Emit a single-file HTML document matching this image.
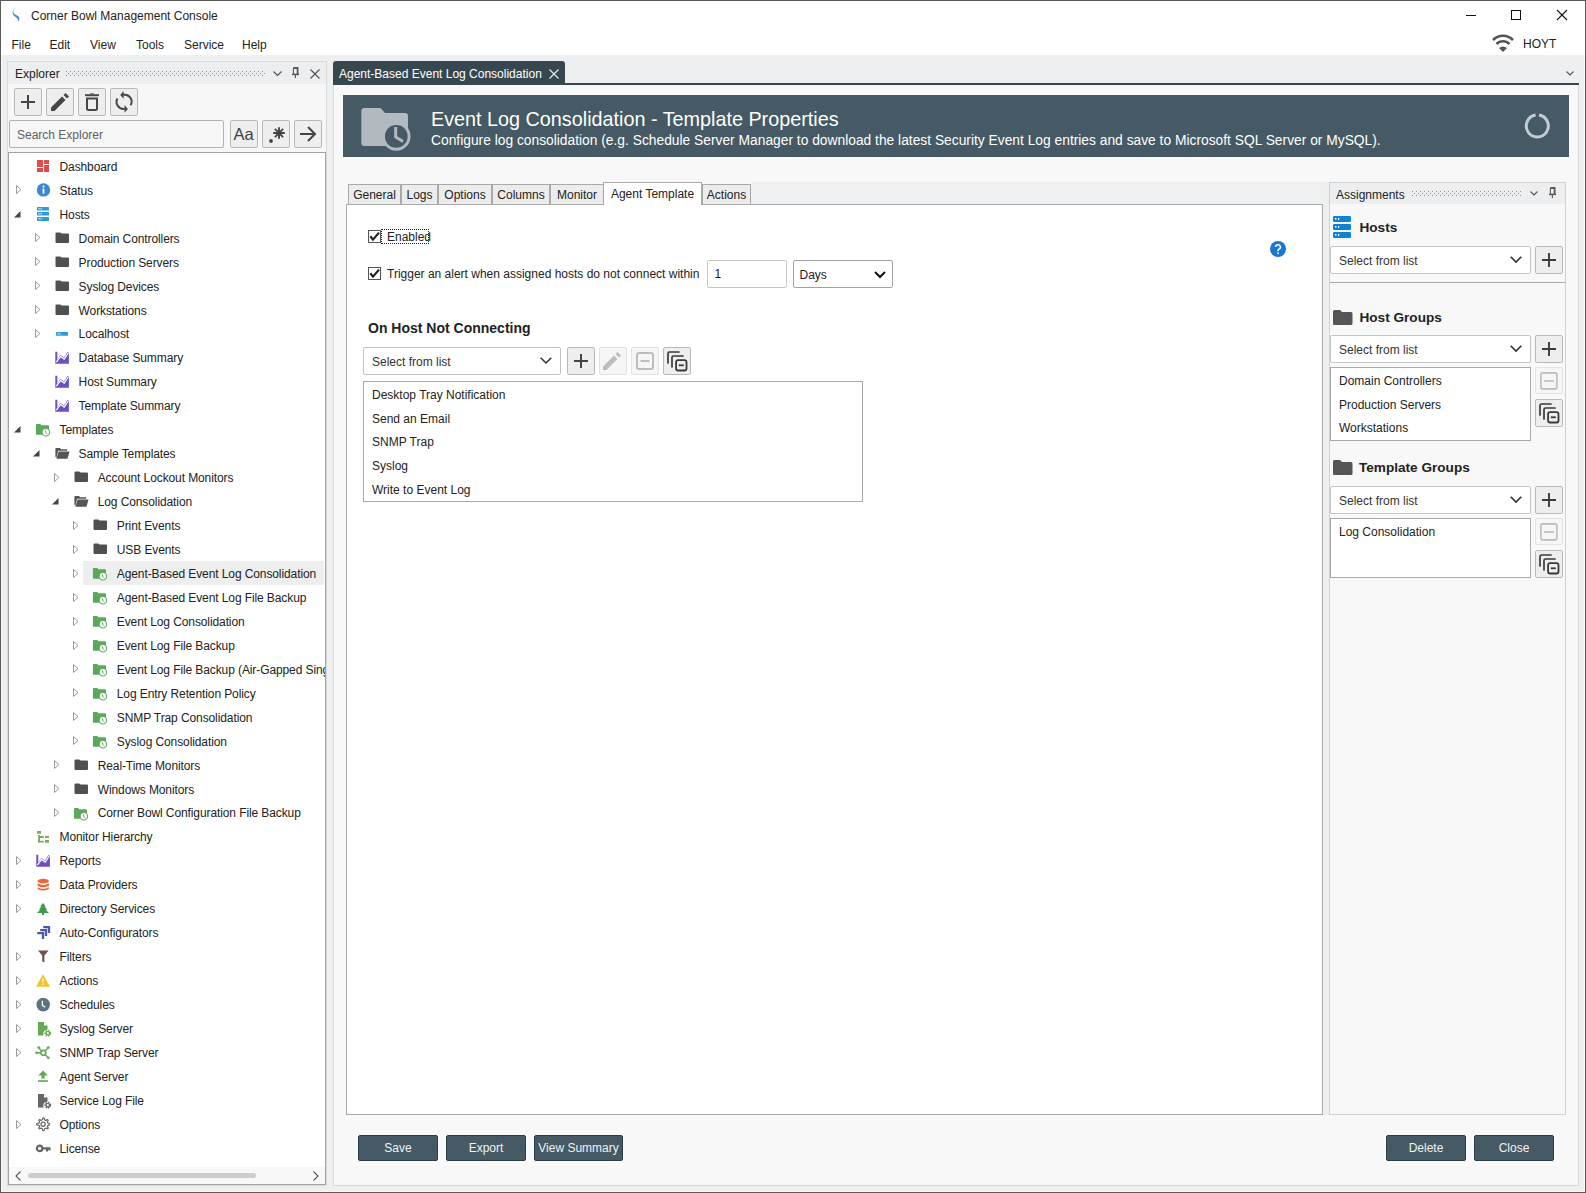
<!DOCTYPE html><html><head><meta charset="utf-8"><title>Corner Bowl Management Console</title><style>
*{box-sizing:border-box;margin:0;padding:0}
html,body{width:1586px;height:1193px;overflow:hidden}
body{position:relative;background:#eeeff1;font-family:"Liberation Sans",sans-serif;font-size:12px;color:#222}
.a{position:absolute}
.t{position:absolute;white-space:nowrap;line-height:16px;font-size:12px}
.b{position:absolute;border:1px solid #b9b9b9;background:#eeeeee;border-radius:2px}
.bd{position:absolute;border:1px solid #e2e2e2;background:#f6f6f6;border-radius:2px}
.cb{position:absolute;background:#fff;border:1px solid #c4c4c4;border-radius:2px}
.btn{position:absolute;background:#455a64;border:1px solid #2e3d44;border-radius:2px;color:#f2f2f2;text-align:center;line-height:25px;font-size:12px}
svg{position:absolute;overflow:visible}
</style></head><body>
<div class="a" style="left:0px;top:0px;width:1586px;height:55px;background:#fff"></div>
<svg style="left:0px;top:0px" width="30" height="30" viewBox="0 0 30 30"><path d="M16.6 7 C14.5 8.5 13.2 10 13.3 12 C13.4 13.8 15 14.6 17 15.5 C19 16.5 19.8 18 19.2 20 L18.6 22 C18.2 20 17.6 18.4 16 17.3 C14.5 16.3 12.6 15.2 12.6 12.6 C12.6 10.2 14.5 8.2 16.6 7Z" fill="#4a86d0"/></svg>
<div class="t" style="left:31px;top:7.84px;font-size:12px;line-height:16px;">Corner Bowl Management Console</div>
<div class="a" style="left:1466px;top:15px;width:10px;height:1px;background:#111"></div>
<div class="a" style="left:1511px;top:10px;width:10px;height:10px;border:1px solid #111"></div>
<svg style="left:1557px;top:10px" width="10" height="10" viewBox="0 0 10 10"><path d="M0 0L10 10M10 0L0 10" stroke="#111" stroke-width="1.1"/></svg>
<div class="t" style="left:11.5px;top:36.84px;font-size:12px;line-height:16px;">File</div>
<div class="t" style="left:49.5px;top:36.84px;font-size:12px;line-height:16px;">Edit</div>
<div class="t" style="left:90px;top:36.84px;font-size:12px;line-height:16px;">View</div>
<div class="t" style="left:136px;top:36.84px;font-size:12px;line-height:16px;">Tools</div>
<div class="t" style="left:184px;top:36.84px;font-size:12px;line-height:16px;">Service</div>
<div class="t" style="left:242px;top:36.84px;font-size:12px;line-height:16px;">Help</div>
<svg style="left:1492px;top:34px" width="22" height="18" viewBox="0 0 22 18"><path d="M1 6 A14 14 0 0 1 21 6" fill="none" stroke="#555" stroke-width="2.6"/><path d="M4.5 10 A9 9 0 0 1 17.5 10" fill="none" stroke="#555" stroke-width="2.6"/><path d="M7 14 L11 18 L15 14 A6 6 0 0 0 7 14Z" fill="#555"/></svg>
<div class="t" style="left:1523px;top:35.84px;font-size:12px;line-height:16px;">HOYT</div>
<div class="a" style="left:7px;top:61px;width:320px;height:1125px;border:1px solid #d9dadc;background:#f7f7f7"></div>
<div class="a" style="left:8px;top:62px;width:318px;height:22px;background:#eceef0"></div>
<div class="t" style="left:15px;top:65.84px;font-size:12px;line-height:16px;">Explorer</div>
<svg style="left:66px;top:71px" width="200" height="5"><defs><pattern id="gp66" width="4" height="4" patternUnits="userSpaceOnUse"><rect x="0" y="0" width="1" height="1" fill="#8a8a8a"/><rect x="2" y="2" width="1" height="1" fill="#8a8a8a"/></pattern></defs><rect width="200" height="5" fill="url(#gp66)"/></svg>
<svg style="left:273px;top:71px" width="9" height="6" viewBox="0 0 9 6"><path d="M0.5 0.5L4.5 4.5L8.5 0.5" fill="none" stroke="#555" stroke-width="1.2"/></svg>
<svg style="left:291px;top:67px" width="9" height="12" viewBox="0 0 9 12"><path d="M2.4 1 H6.6 V7" fill="none" stroke="#5a5a5a" stroke-width="1.8"/><path d="M2.4 1 V7" stroke="#5a5a5a" stroke-width="1.1"/><path d="M1 7.4 H8" stroke="#5a5a5a" stroke-width="1.5"/><path d="M4.4 7.5 V11" stroke="#5a5a5a" stroke-width="1.2"/></svg>
<svg style="left:310px;top:69px" width="10" height="10" viewBox="0 0 10 10"><path d="M0.5 0.5L9.5 9.5M9.5 0.5L0.5 9.5" stroke="#555" stroke-width="1.2"/></svg>
<div class="b" style="left:14px;top:88px;width:28px;height:28px"></div>
<div class="b" style="left:46px;top:88px;width:28px;height:28px"></div>
<div class="b" style="left:78px;top:88px;width:28px;height:28px"></div>
<div class="b" style="left:110px;top:88px;width:28px;height:28px"></div>
<svg style="left:21px;top:95px" width="14" height="14" viewBox="0 0 14 14"><path d="M7 0V14M0 7H14" stroke="#444" stroke-width="2"/></svg>
<svg style="left:51px;top:93px" width="18" height="18" viewBox="0 0 18 18"><path d="M0 18 L0 14.5 L11 3.5 L14.5 7 L3.5 18Z" fill="#474747"/><path d="M12.5 2 L14.5 0 L18 3.5 L16 5.5Z" fill="#474747"/></svg>
<svg style="left:85px;top:93px" width="14" height="18" viewBox="0 0 14 18"><rect x="0" y="1.2" width="14" height="2" fill="#474747"/><path d="M4 1.2 Q7 -0.5 10 1.2" fill="#474747"/><path d="M2 5.5 V15.5 Q2 17 3.5 17 H10.5 Q12 17 12 15.5 V5.5" fill="none" stroke="#474747" stroke-width="2"/><rect x="1" y="4.5" width="12" height="2" fill="#474747"/></svg>
<svg style="left:110px;top:88px" width="28" height="28" viewBox="0 0 28 28"><path d="M13.3 6.8 A7 7 0 0 1 20.6 17.3" fill="none" stroke="#474747" stroke-width="2"/><path d="M14.7 20.8 A7 7 0 0 1 7.4 10.5" fill="none" stroke="#474747" stroke-width="2"/><path d="M10.2 6.9 L13.6 3 V10.8Z" fill="#474747"/><path d="M17.9 20.9 L14.5 17 V24.8Z" fill="#474747"/></svg>
<div class="a" style="left:9px;top:120px;width:215px;height:28px;background:#f7f7f7;border:1px solid #b3b3b3;border-radius:2px"></div>
<div class="t" style="left:17px;top:126.84px;font-size:12px;line-height:16px;color:#5f5f5f">Search Explorer</div>
<div class="b" style="left:230px;top:120px;width:28px;height:28px"></div>
<div class="b" style="left:262px;top:120px;width:28px;height:28px"></div>
<div class="b" style="left:294px;top:120px;width:28px;height:28px"></div>
<div class="t" style="left:233.5px;top:124.28px;font-size:16.5px;line-height:20px;color:#404040;font-size:16.5px">Aa</div>
<svg style="left:268px;top:127px" width="20" height="16" viewBox="0 0 20 16"><circle cx="3" cy="14" r="1.9" fill="#444"/><path d="M11 0.2V11.8M5.2 6H16.8M6.9 1.9L15.1 10.1M15.1 1.9L6.9 10.1" stroke="#444" stroke-width="1.9"/></svg>
<svg style="left:300px;top:126px" width="16" height="16" viewBox="0 0 16 16"><path d="M0 8H15M8 1L15 8L8 15" fill="none" stroke="#444" stroke-width="2"/></svg>
<div class="a" style="left:8px;top:152px;width:318px;height:1033px;background:#fff;border:1px solid #a3a3a3"></div>
<div class="a" style="left:9px;top:153px;width:316px;height:1014px;overflow:hidden">
<svg style="left:26px;top:5px" width="16" height="16" viewBox="0 0 16 16"><rect x="2" y="2" width="6" height="7" fill="#e14b4b"/><rect x="9" y="2" width="5" height="4" fill="#e14b4b"/><rect x="2" y="10" width="6" height="4" fill="#e14b4b"/><rect x="9" y="7" width="5" height="7" fill="#e14b4b"/></svg>
<div class="t" style="left:50.5px;top:5.84px;font-size:12px;line-height:16px;letter-spacing:-0.1px">Dashboard</div>
<svg style="left:7px;top:32.45px" width="6" height="9" viewBox="0 0 6 9"><path d="M0.5 0.5 L5 4.5 L0.5 8.5Z" fill="none" stroke="#9a9a9a" stroke-width="1"/></svg>
<svg style="left:26px;top:29px" width="16" height="16" viewBox="0 0 16 16"><circle cx="8.5" cy="7.9" r="6.7" fill="#3b88d6"/><rect x="7.6" y="6.6" width="1.8" height="5" fill="#fff"/><rect x="7.6" y="3.6" width="1.8" height="1.8" fill="#fff"/></svg>
<div class="t" style="left:50.5px;top:29.79px;font-size:12px;line-height:16px;letter-spacing:-0.1px">Status</div>
<svg style="left:4.699999999999999px;top:57.90px" width="7" height="7" viewBox="0 0 7 7"><path d="M6.5 0 V6.5 H0Z" fill="#444"/></svg>
<svg style="left:26px;top:53px" width="16" height="16" viewBox="0 0 16 16"><rect x="2" y="1" width="12" height="3.6" rx="0.6" fill="#2e9ad6"/><rect x="3.5" y="2.2" width="1.2" height="1.2" fill="#fff"/><rect x="5.5" y="2.2" width="1.2" height="1.2" fill="#fff"/><rect x="2" y="6" width="12" height="3.6" rx="0.6" fill="#2e9ad6"/><rect x="3.5" y="7.2" width="1.2" height="1.2" fill="#fff"/><rect x="5.5" y="7.2" width="1.2" height="1.2" fill="#fff"/><rect x="2" y="11" width="12" height="4" rx="0.6" fill="#2e9ad6"/><rect x="3.5" y="12.2" width="1.2" height="1.2" fill="#fff"/><rect x="5.5" y="12.2" width="1.2" height="1.2" fill="#fff"/></svg>
<div class="t" style="left:50.5px;top:53.74px;font-size:12px;line-height:16px;letter-spacing:-0.1px">Hosts</div>
<svg style="left:26px;top:80.35px" width="6" height="9" viewBox="0 0 6 9"><path d="M0.5 0.5 L5 4.5 L0.5 8.5Z" fill="none" stroke="#9a9a9a" stroke-width="1"/></svg>
<svg style="left:45px;top:77px" width="16" height="16" viewBox="0 0 16 16"><path d="M1.5 3.4 Q1.5 2.4 2.5 2.4 H6.3 L7.5 3.6 H14 Q15 3.6 15 4.6 V11.9 Q15 12.9 14 12.9 H2.5 Q1.5 12.9 1.5 11.9Z" fill="#505050"/></svg>
<div class="t" style="left:69.6px;top:77.69px;font-size:12px;line-height:16px;letter-spacing:-0.1px">Domain Controllers</div>
<svg style="left:26px;top:104.30px" width="6" height="9" viewBox="0 0 6 9"><path d="M0.5 0.5 L5 4.5 L0.5 8.5Z" fill="none" stroke="#9a9a9a" stroke-width="1"/></svg>
<svg style="left:45px;top:101px" width="16" height="16" viewBox="0 0 16 16"><path d="M1.5 3.4 Q1.5 2.4 2.5 2.4 H6.3 L7.5 3.6 H14 Q15 3.6 15 4.6 V11.9 Q15 12.9 14 12.9 H2.5 Q1.5 12.9 1.5 11.9Z" fill="#505050"/></svg>
<div class="t" style="left:69.6px;top:101.64px;font-size:12px;line-height:16px;letter-spacing:-0.1px">Production Servers</div>
<svg style="left:26px;top:128.25px" width="6" height="9" viewBox="0 0 6 9"><path d="M0.5 0.5 L5 4.5 L0.5 8.5Z" fill="none" stroke="#9a9a9a" stroke-width="1"/></svg>
<svg style="left:45px;top:125px" width="16" height="16" viewBox="0 0 16 16"><path d="M1.5 3.4 Q1.5 2.4 2.5 2.4 H6.3 L7.5 3.6 H14 Q15 3.6 15 4.6 V11.9 Q15 12.9 14 12.9 H2.5 Q1.5 12.9 1.5 11.9Z" fill="#505050"/></svg>
<div class="t" style="left:69.6px;top:125.59px;font-size:12px;line-height:16px;letter-spacing:-0.1px">Syslog Devices</div>
<svg style="left:26px;top:152.20px" width="6" height="9" viewBox="0 0 6 9"><path d="M0.5 0.5 L5 4.5 L0.5 8.5Z" fill="none" stroke="#9a9a9a" stroke-width="1"/></svg>
<svg style="left:45px;top:149px" width="16" height="16" viewBox="0 0 16 16"><path d="M1.5 3.4 Q1.5 2.4 2.5 2.4 H6.3 L7.5 3.6 H14 Q15 3.6 15 4.6 V11.9 Q15 12.9 14 12.9 H2.5 Q1.5 12.9 1.5 11.9Z" fill="#505050"/></svg>
<div class="t" style="left:69.6px;top:149.54px;font-size:12px;line-height:16px;letter-spacing:-0.1px">Workstations</div>
<svg style="left:26px;top:176.15px" width="6" height="9" viewBox="0 0 6 9"><path d="M0.5 0.5 L5 4.5 L0.5 8.5Z" fill="none" stroke="#9a9a9a" stroke-width="1"/></svg>
<svg style="left:45px;top:173px" width="16" height="16" viewBox="0 0 16 16"><rect x="2" y="6" width="12" height="3.8" rx="0.6" fill="#2e9ad6"/><rect x="3.5" y="7.3" width="1.2" height="1.2" fill="#fff"/><rect x="5.5" y="7.3" width="1.2" height="1.2" fill="#fff"/></svg>
<div class="t" style="left:69.6px;top:173.49px;font-size:12px;line-height:16px;letter-spacing:-0.1px">Localhost</div>
<svg style="left:45px;top:197px" width="16" height="16" viewBox="0 0 16 16"><path d="M1.3 1.8 H3.3 V9.6 L6.6 5 L10 7.6 L13.6 2 L14.9 3 V13.7 H1.3Z" fill="#6d4fc1"/><path d="M2.4 12.2 L6.6 6.4 L10.2 9.1 L14.3 3" fill="none" stroke="#fff" stroke-width="1.2"/></svg>
<div class="t" style="left:69.6px;top:197.44px;font-size:12px;line-height:16px;letter-spacing:-0.1px">Database Summary</div>
<svg style="left:45px;top:221px" width="16" height="16" viewBox="0 0 16 16"><path d="M1.3 1.8 H3.3 V9.6 L6.6 5 L10 7.6 L13.6 2 L14.9 3 V13.7 H1.3Z" fill="#6d4fc1"/><path d="M2.4 12.2 L6.6 6.4 L10.2 9.1 L14.3 3" fill="none" stroke="#fff" stroke-width="1.2"/></svg>
<div class="t" style="left:69.6px;top:221.39px;font-size:12px;line-height:16px;letter-spacing:-0.1px">Host Summary</div>
<svg style="left:45px;top:245px" width="16" height="16" viewBox="0 0 16 16"><path d="M1.3 1.8 H3.3 V9.6 L6.6 5 L10 7.6 L13.6 2 L14.9 3 V13.7 H1.3Z" fill="#6d4fc1"/><path d="M2.4 12.2 L6.6 6.4 L10.2 9.1 L14.3 3" fill="none" stroke="#fff" stroke-width="1.2"/></svg>
<div class="t" style="left:69.6px;top:245.34px;font-size:12px;line-height:16px;letter-spacing:-0.1px">Template Summary</div>
<svg style="left:4.699999999999999px;top:273.45px" width="7" height="7" viewBox="0 0 7 7"><path d="M6.5 0 V6.5 H0Z" fill="#444"/></svg>
<svg style="left:26px;top:268px" width="16" height="16" viewBox="0 0 16 16"><path d="M0.9 4 Q0.9 3.1 1.8 3.1 H5.2 L6.4 4.3 H13.1 Q14 4.3 14 5.2 V12.8 Q14 13.7 13.1 13.7 H1.8 Q0.9 13.7 0.9 12.8Z" fill="#5aa85a"/><circle cx="10.9" cy="11.3" r="3.75" fill="#fff" stroke="#5aa85a" stroke-width="1.1"/><path d="M10.5 9.1 V11.5 L12.5 12.9" fill="none" stroke="#5aa85a" stroke-width="0.85"/></svg>
<div class="t" style="left:50.5px;top:269.29px;font-size:12px;line-height:16px;letter-spacing:-0.1px">Templates</div>
<svg style="left:23.700000000000003px;top:297.40px" width="7" height="7" viewBox="0 0 7 7"><path d="M6.5 0 V6.5 H0Z" fill="#444"/></svg>
<svg style="left:45px;top:292px" width="16" height="16" viewBox="0 0 16 16"><path d="M1.4 4 Q1.4 3.1 2.3 3.1 H6 L7.2 4.3 H13.2 V5.7 H4.1 L2.5 12.5 Q1.4 12.5 1.4 11.6Z" fill="#555"/><path d="M4.6 6.6 H15.5 L13.5 13.8 H2.4Z" fill="#555"/></svg>
<div class="t" style="left:69.6px;top:293.24px;font-size:12px;line-height:16px;letter-spacing:-0.1px">Sample Templates</div>
<svg style="left:45px;top:319.85px" width="6" height="9" viewBox="0 0 6 9"><path d="M0.5 0.5 L5 4.5 L0.5 8.5Z" fill="none" stroke="#9a9a9a" stroke-width="1"/></svg>
<svg style="left:64px;top:316px" width="16" height="16" viewBox="0 0 16 16"><path d="M1.5 3.4 Q1.5 2.4 2.5 2.4 H6.3 L7.5 3.6 H14 Q15 3.6 15 4.6 V11.9 Q15 12.9 14 12.9 H2.5 Q1.5 12.9 1.5 11.9Z" fill="#505050"/></svg>
<div class="t" style="left:88.7px;top:317.19px;font-size:12px;line-height:16px;letter-spacing:-0.1px">Account Lockout Monitors</div>
<svg style="left:42.7px;top:345.30px" width="7" height="7" viewBox="0 0 7 7"><path d="M6.5 0 V6.5 H0Z" fill="#444"/></svg>
<svg style="left:64px;top:340px" width="16" height="16" viewBox="0 0 16 16"><path d="M1.4 4 Q1.4 3.1 2.3 3.1 H6 L7.2 4.3 H13.2 V5.7 H4.1 L2.5 12.5 Q1.4 12.5 1.4 11.6Z" fill="#555"/><path d="M4.6 6.6 H15.5 L13.5 13.8 H2.4Z" fill="#555"/></svg>
<div class="t" style="left:88.7px;top:341.14px;font-size:12px;line-height:16px;letter-spacing:-0.1px">Log Consolidation</div>
<svg style="left:64px;top:367.75px" width="6" height="9" viewBox="0 0 6 9"><path d="M0.5 0.5 L5 4.5 L0.5 8.5Z" fill="none" stroke="#9a9a9a" stroke-width="1"/></svg>
<svg style="left:83px;top:364px" width="16" height="16" viewBox="0 0 16 16"><path d="M1.5 3.4 Q1.5 2.4 2.5 2.4 H6.3 L7.5 3.6 H14 Q15 3.6 15 4.6 V11.9 Q15 12.9 14 12.9 H2.5 Q1.5 12.9 1.5 11.9Z" fill="#505050"/></svg>
<div class="t" style="left:107.80000000000001px;top:365.09px;font-size:12px;line-height:16px;letter-spacing:-0.1px">Print Events</div>
<svg style="left:64px;top:391.70px" width="6" height="9" viewBox="0 0 6 9"><path d="M0.5 0.5 L5 4.5 L0.5 8.5Z" fill="none" stroke="#9a9a9a" stroke-width="1"/></svg>
<svg style="left:83px;top:388px" width="16" height="16" viewBox="0 0 16 16"><path d="M1.5 3.4 Q1.5 2.4 2.5 2.4 H6.3 L7.5 3.6 H14 Q15 3.6 15 4.6 V11.9 Q15 12.9 14 12.9 H2.5 Q1.5 12.9 1.5 11.9Z" fill="#505050"/></svg>
<div class="t" style="left:107.80000000000001px;top:389.04px;font-size:12px;line-height:16px;letter-spacing:-0.1px">USB Events</div>
<div class="a" style="left:74px;top:408px;width:241px;height:24px;background:#eeeeee"></div>
<svg style="left:64px;top:415.65px" width="6" height="9" viewBox="0 0 6 9"><path d="M0.5 0.5 L5 4.5 L0.5 8.5Z" fill="none" stroke="#9a9a9a" stroke-width="1"/></svg>
<svg style="left:83px;top:412px" width="16" height="16" viewBox="0 0 16 16"><path d="M0.9 4 Q0.9 3.1 1.8 3.1 H5.2 L6.4 4.3 H13.1 Q14 4.3 14 5.2 V12.8 Q14 13.7 13.1 13.7 H1.8 Q0.9 13.7 0.9 12.8Z" fill="#5aa85a"/><circle cx="10.9" cy="11.3" r="3.75" fill="#fff" stroke="#5aa85a" stroke-width="1.1"/><path d="M10.5 9.1 V11.5 L12.5 12.9" fill="none" stroke="#5aa85a" stroke-width="0.85"/></svg>
<div class="t" style="left:107.80000000000001px;top:412.99px;font-size:12px;line-height:16px;letter-spacing:-0.1px">Agent-Based Event Log Consolidation</div>
<svg style="left:64px;top:439.60px" width="6" height="9" viewBox="0 0 6 9"><path d="M0.5 0.5 L5 4.5 L0.5 8.5Z" fill="none" stroke="#9a9a9a" stroke-width="1"/></svg>
<svg style="left:83px;top:436px" width="16" height="16" viewBox="0 0 16 16"><path d="M0.9 4 Q0.9 3.1 1.8 3.1 H5.2 L6.4 4.3 H13.1 Q14 4.3 14 5.2 V12.8 Q14 13.7 13.1 13.7 H1.8 Q0.9 13.7 0.9 12.8Z" fill="#5aa85a"/><circle cx="10.9" cy="11.3" r="3.75" fill="#fff" stroke="#5aa85a" stroke-width="1.1"/><path d="M10.5 9.1 V11.5 L12.5 12.9" fill="none" stroke="#5aa85a" stroke-width="0.85"/></svg>
<div class="t" style="left:107.80000000000001px;top:436.94px;font-size:12px;line-height:16px;letter-spacing:-0.1px">Agent-Based Event Log File Backup</div>
<svg style="left:64px;top:463.55px" width="6" height="9" viewBox="0 0 6 9"><path d="M0.5 0.5 L5 4.5 L0.5 8.5Z" fill="none" stroke="#9a9a9a" stroke-width="1"/></svg>
<svg style="left:83px;top:460px" width="16" height="16" viewBox="0 0 16 16"><path d="M0.9 4 Q0.9 3.1 1.8 3.1 H5.2 L6.4 4.3 H13.1 Q14 4.3 14 5.2 V12.8 Q14 13.7 13.1 13.7 H1.8 Q0.9 13.7 0.9 12.8Z" fill="#5aa85a"/><circle cx="10.9" cy="11.3" r="3.75" fill="#fff" stroke="#5aa85a" stroke-width="1.1"/><path d="M10.5 9.1 V11.5 L12.5 12.9" fill="none" stroke="#5aa85a" stroke-width="0.85"/></svg>
<div class="t" style="left:107.80000000000001px;top:460.89px;font-size:12px;line-height:16px;letter-spacing:-0.1px">Event Log Consolidation</div>
<svg style="left:64px;top:487.50px" width="6" height="9" viewBox="0 0 6 9"><path d="M0.5 0.5 L5 4.5 L0.5 8.5Z" fill="none" stroke="#9a9a9a" stroke-width="1"/></svg>
<svg style="left:83px;top:484px" width="16" height="16" viewBox="0 0 16 16"><path d="M0.9 4 Q0.9 3.1 1.8 3.1 H5.2 L6.4 4.3 H13.1 Q14 4.3 14 5.2 V12.8 Q14 13.7 13.1 13.7 H1.8 Q0.9 13.7 0.9 12.8Z" fill="#5aa85a"/><circle cx="10.9" cy="11.3" r="3.75" fill="#fff" stroke="#5aa85a" stroke-width="1.1"/><path d="M10.5 9.1 V11.5 L12.5 12.9" fill="none" stroke="#5aa85a" stroke-width="0.85"/></svg>
<div class="t" style="left:107.80000000000001px;top:484.84px;font-size:12px;line-height:16px;letter-spacing:-0.1px">Event Log File Backup</div>
<svg style="left:64px;top:511.45px" width="6" height="9" viewBox="0 0 6 9"><path d="M0.5 0.5 L5 4.5 L0.5 8.5Z" fill="none" stroke="#9a9a9a" stroke-width="1"/></svg>
<svg style="left:83px;top:508px" width="16" height="16" viewBox="0 0 16 16"><path d="M0.9 4 Q0.9 3.1 1.8 3.1 H5.2 L6.4 4.3 H13.1 Q14 4.3 14 5.2 V12.8 Q14 13.7 13.1 13.7 H1.8 Q0.9 13.7 0.9 12.8Z" fill="#5aa85a"/><circle cx="10.9" cy="11.3" r="3.75" fill="#fff" stroke="#5aa85a" stroke-width="1.1"/><path d="M10.5 9.1 V11.5 L12.5 12.9" fill="none" stroke="#5aa85a" stroke-width="0.85"/></svg>
<div class="t" style="left:107.80000000000001px;top:508.79px;font-size:12px;line-height:16px;letter-spacing:-0.1px">Event Log File Backup (Air-Gapped Single Host)</div>
<svg style="left:64px;top:535.40px" width="6" height="9" viewBox="0 0 6 9"><path d="M0.5 0.5 L5 4.5 L0.5 8.5Z" fill="none" stroke="#9a9a9a" stroke-width="1"/></svg>
<svg style="left:83px;top:532px" width="16" height="16" viewBox="0 0 16 16"><path d="M0.9 4 Q0.9 3.1 1.8 3.1 H5.2 L6.4 4.3 H13.1 Q14 4.3 14 5.2 V12.8 Q14 13.7 13.1 13.7 H1.8 Q0.9 13.7 0.9 12.8Z" fill="#5aa85a"/><circle cx="10.9" cy="11.3" r="3.75" fill="#fff" stroke="#5aa85a" stroke-width="1.1"/><path d="M10.5 9.1 V11.5 L12.5 12.9" fill="none" stroke="#5aa85a" stroke-width="0.85"/></svg>
<div class="t" style="left:107.80000000000001px;top:532.74px;font-size:12px;line-height:16px;letter-spacing:-0.1px">Log Entry Retention Policy</div>
<svg style="left:64px;top:559.35px" width="6" height="9" viewBox="0 0 6 9"><path d="M0.5 0.5 L5 4.5 L0.5 8.5Z" fill="none" stroke="#9a9a9a" stroke-width="1"/></svg>
<svg style="left:83px;top:556px" width="16" height="16" viewBox="0 0 16 16"><path d="M0.9 4 Q0.9 3.1 1.8 3.1 H5.2 L6.4 4.3 H13.1 Q14 4.3 14 5.2 V12.8 Q14 13.7 13.1 13.7 H1.8 Q0.9 13.7 0.9 12.8Z" fill="#5aa85a"/><circle cx="10.9" cy="11.3" r="3.75" fill="#fff" stroke="#5aa85a" stroke-width="1.1"/><path d="M10.5 9.1 V11.5 L12.5 12.9" fill="none" stroke="#5aa85a" stroke-width="0.85"/></svg>
<div class="t" style="left:107.80000000000001px;top:556.69px;font-size:12px;line-height:16px;letter-spacing:-0.1px">SNMP Trap Consolidation</div>
<svg style="left:64px;top:583.30px" width="6" height="9" viewBox="0 0 6 9"><path d="M0.5 0.5 L5 4.5 L0.5 8.5Z" fill="none" stroke="#9a9a9a" stroke-width="1"/></svg>
<svg style="left:83px;top:580px" width="16" height="16" viewBox="0 0 16 16"><path d="M0.9 4 Q0.9 3.1 1.8 3.1 H5.2 L6.4 4.3 H13.1 Q14 4.3 14 5.2 V12.8 Q14 13.7 13.1 13.7 H1.8 Q0.9 13.7 0.9 12.8Z" fill="#5aa85a"/><circle cx="10.9" cy="11.3" r="3.75" fill="#fff" stroke="#5aa85a" stroke-width="1.1"/><path d="M10.5 9.1 V11.5 L12.5 12.9" fill="none" stroke="#5aa85a" stroke-width="0.85"/></svg>
<div class="t" style="left:107.80000000000001px;top:580.64px;font-size:12px;line-height:16px;letter-spacing:-0.1px">Syslog Consolidation</div>
<svg style="left:45px;top:607.25px" width="6" height="9" viewBox="0 0 6 9"><path d="M0.5 0.5 L5 4.5 L0.5 8.5Z" fill="none" stroke="#9a9a9a" stroke-width="1"/></svg>
<svg style="left:64px;top:604px" width="16" height="16" viewBox="0 0 16 16"><path d="M1.5 3.4 Q1.5 2.4 2.5 2.4 H6.3 L7.5 3.6 H14 Q15 3.6 15 4.6 V11.9 Q15 12.9 14 12.9 H2.5 Q1.5 12.9 1.5 11.9Z" fill="#505050"/></svg>
<div class="t" style="left:88.7px;top:604.59px;font-size:12px;line-height:16px;letter-spacing:-0.1px">Real-Time Monitors</div>
<svg style="left:45px;top:631.20px" width="6" height="9" viewBox="0 0 6 9"><path d="M0.5 0.5 L5 4.5 L0.5 8.5Z" fill="none" stroke="#9a9a9a" stroke-width="1"/></svg>
<svg style="left:64px;top:628px" width="16" height="16" viewBox="0 0 16 16"><path d="M1.5 3.4 Q1.5 2.4 2.5 2.4 H6.3 L7.5 3.6 H14 Q15 3.6 15 4.6 V11.9 Q15 12.9 14 12.9 H2.5 Q1.5 12.9 1.5 11.9Z" fill="#505050"/></svg>
<div class="t" style="left:88.7px;top:628.54px;font-size:12px;line-height:16px;letter-spacing:-0.1px">Windows Monitors</div>
<svg style="left:45px;top:655.15px" width="6" height="9" viewBox="0 0 6 9"><path d="M0.5 0.5 L5 4.5 L0.5 8.5Z" fill="none" stroke="#9a9a9a" stroke-width="1"/></svg>
<svg style="left:64px;top:652px" width="16" height="16" viewBox="0 0 16 16"><path d="M0.9 4 Q0.9 3.1 1.8 3.1 H5.2 L6.4 4.3 H13.1 Q14 4.3 14 5.2 V12.8 Q14 13.7 13.1 13.7 H1.8 Q0.9 13.7 0.9 12.8Z" fill="#5aa85a"/><circle cx="10.9" cy="11.3" r="3.75" fill="#fff" stroke="#5aa85a" stroke-width="1.1"/><path d="M10.5 9.1 V11.5 L12.5 12.9" fill="none" stroke="#5aa85a" stroke-width="0.85"/></svg>
<div class="t" style="left:88.7px;top:652.49px;font-size:12px;line-height:16px;letter-spacing:-0.1px">Corner Bowl Configuration File Backup</div>
<svg style="left:26px;top:676px" width="16" height="16" viewBox="0 0 16 16"><rect x="2.1" y="2" width="3.9" height="2.7" fill="#7aa860"/><rect x="3.2" y="6" width="1.8" height="7.5" fill="#7aa860"/><rect x="5" y="7" width="3.8" height="2" fill="#7aa860"/><rect x="3.2" y="11.8" width="5.6" height="1.7" fill="#7aa860"/><rect x="10.1" y="6.9" width="3.8" height="2.1" fill="#7aa860"/><rect x="10.1" y="11" width="3.8" height="2.8" fill="#7aa860"/></svg>
<div class="t" style="left:50.5px;top:676.44px;font-size:12px;line-height:16px;letter-spacing:-0.1px">Monitor Hierarchy</div>
<svg style="left:7px;top:703.05px" width="6" height="9" viewBox="0 0 6 9"><path d="M0.5 0.5 L5 4.5 L0.5 8.5Z" fill="none" stroke="#9a9a9a" stroke-width="1"/></svg>
<svg style="left:26px;top:700px" width="16" height="16" viewBox="0 0 16 16"><path d="M1.3 1.8 H3.3 V9.6 L6.6 5 L10 7.6 L13.6 2 L14.9 3 V13.7 H1.3Z" fill="#6d4fc1"/><path d="M2.4 12.2 L6.6 6.4 L10.2 9.1 L14.3 3" fill="none" stroke="#fff" stroke-width="1.2"/></svg>
<div class="t" style="left:50.5px;top:700.39px;font-size:12px;line-height:16px;letter-spacing:-0.1px">Reports</div>
<svg style="left:7px;top:727.00px" width="6" height="9" viewBox="0 0 6 9"><path d="M0.5 0.5 L5 4.5 L0.5 8.5Z" fill="none" stroke="#9a9a9a" stroke-width="1"/></svg>
<svg style="left:26px;top:724px" width="16" height="16" viewBox="0 0 16 16"><ellipse cx="8.2" cy="4.1" rx="5.7" ry="2.3" fill="#e8673d"/><path d="M2.5 6.3 Q8.2 9.5 13.9 6.3 V8.7 Q8.2 11.9 2.5 8.7Z" fill="#e8673d"/><path d="M2.5 10.2 Q8.2 13.4 13.9 10.2 V12 Q8.2 15.2 2.5 12Z" fill="#e8673d"/></svg>
<div class="t" style="left:50.5px;top:724.34px;font-size:12px;line-height:16px;letter-spacing:-0.1px">Data Providers</div>
<svg style="left:7px;top:750.95px" width="6" height="9" viewBox="0 0 6 9"><path d="M0.5 0.5 L5 4.5 L0.5 8.5Z" fill="none" stroke="#9a9a9a" stroke-width="1"/></svg>
<svg style="left:26px;top:747px" width="16" height="16" viewBox="0 0 16 16"><path d="M8 3 L10.8 6.6 H9.6 L12.2 9.8 H10.8 L14 13 H9 V15 H7 V13 H2 L5.2 9.8 H3.8 L6.4 6.6 H5.2Z" fill="#3f9a4c"/></svg>
<div class="t" style="left:50.5px;top:748.29px;font-size:12px;line-height:16px;letter-spacing:-0.1px">Directory Services</div>
<svg style="left:26px;top:771px" width="16" height="16" viewBox="0 0 16 16"><path d="M8.2 3.2 H14 V9 M5.2 6.2 H11 V12 M2.2 9.2 H8 V15" fill="none" stroke="#4a58b4" stroke-width="2.3"/></svg>
<div class="t" style="left:50.5px;top:772.24px;font-size:12px;line-height:16px;letter-spacing:-0.1px">Auto-Configurators</div>
<svg style="left:7px;top:798.85px" width="6" height="9" viewBox="0 0 6 9"><path d="M0.5 0.5 L5 4.5 L0.5 8.5Z" fill="none" stroke="#9a9a9a" stroke-width="1"/></svg>
<svg style="left:26px;top:795px" width="16" height="16" viewBox="0 0 16 16"><path d="M3 2.5 H13.6 L9.4 7.4 V14.6 L7.2 13.2 V7.4Z" fill="#6b524a"/></svg>
<div class="t" style="left:50.5px;top:796.19px;font-size:12px;line-height:16px;letter-spacing:-0.1px">Filters</div>
<svg style="left:7px;top:822.80px" width="6" height="9" viewBox="0 0 6 9"><path d="M0.5 0.5 L5 4.5 L0.5 8.5Z" fill="none" stroke="#9a9a9a" stroke-width="1"/></svg>
<svg style="left:26px;top:819px" width="16" height="16" viewBox="0 0 16 16"><path d="M8 2.2 L15.1 14.7 H1Z" fill="#f4c12f"/><rect x="7.4" y="6.6" width="1.3" height="3.8" fill="#fff"/><rect x="7.4" y="11.4" width="1.3" height="1.4" fill="#fff"/></svg>
<div class="t" style="left:50.5px;top:820.14px;font-size:12px;line-height:16px;letter-spacing:-0.1px">Actions</div>
<svg style="left:7px;top:846.75px" width="6" height="9" viewBox="0 0 6 9"><path d="M0.5 0.5 L5 4.5 L0.5 8.5Z" fill="none" stroke="#9a9a9a" stroke-width="1"/></svg>
<svg style="left:26px;top:843px" width="16" height="16" viewBox="0 0 16 16"><circle cx="8.2" cy="8.6" r="6.8" fill="#5c7480"/><path d="M7.4 4.8 V9.4 L10.2 11.2" fill="none" stroke="#fff" stroke-width="1.3"/></svg>
<div class="t" style="left:50.5px;top:844.09px;font-size:12px;line-height:16px;letter-spacing:-0.1px">Schedules</div>
<svg style="left:7px;top:870.70px" width="6" height="9" viewBox="0 0 6 9"><path d="M0.5 0.5 L5 4.5 L0.5 8.5Z" fill="none" stroke="#9a9a9a" stroke-width="1"/></svg>
<svg style="left:26px;top:867px" width="16" height="16" viewBox="0 0 16 16"><path d="M3 2 H9 L12.5 5.5 V9.8 A3.6 3.6 0 0 0 9 15.5 H3Z" fill="#65a957"/><path d="M9 2 V5.5 H12.5Z" fill="#fff"/><circle cx="12.8" cy="13.2" r="2.5" fill="none" stroke="#65a957" stroke-width="1.8" stroke-dasharray="1.4 0.9"/><circle cx="12.8" cy="13.2" r="1.7" fill="none" stroke="#65a957" stroke-width="1.2"/></svg>
<div class="t" style="left:50.5px;top:868.04px;font-size:12px;line-height:16px;letter-spacing:-0.1px">Syslog Server</div>
<svg style="left:7px;top:894.65px" width="6" height="9" viewBox="0 0 6 9"><path d="M0.5 0.5 L5 4.5 L0.5 8.5Z" fill="none" stroke="#9a9a9a" stroke-width="1"/></svg>
<svg style="left:26px;top:891px" width="16" height="16" viewBox="0 0 16 16"><circle cx="8.3" cy="8.8" r="2.5" fill="none" stroke="#65a957" stroke-width="1.7"/><path d="M6.6 7.1 L4 4.3 M10 7.1 L12.8 4.3 M10 10.5 L12.8 13.3 M5.8 8.8 H2" stroke="#65a957" stroke-width="1.5"/><circle cx="3.8" cy="3.6" r="1.4" fill="#65a957"/><circle cx="13.3" cy="3.6" r="1.4" fill="#65a957"/><circle cx="13.3" cy="13.8" r="1.4" fill="#65a957"/><circle cx="1.6" cy="8.8" r="1.4" fill="#65a957"/></svg>
<div class="t" style="left:50.5px;top:891.99px;font-size:12px;line-height:16px;letter-spacing:-0.1px">SNMP Trap Server</div>
<svg style="left:26px;top:915px" width="16" height="16" viewBox="0 0 16 16"><path d="M8 2.6 L12.9 7.6 H9.6 V10.6 H6.4 V7.6 H3.1Z" fill="#65a957"/><rect x="3" y="12.2" width="9.9" height="1.7" fill="#65a957"/></svg>
<div class="t" style="left:50.5px;top:915.94px;font-size:12px;line-height:16px;letter-spacing:-0.1px">Agent Server</div>
<svg style="left:26px;top:939px" width="16" height="16" viewBox="0 0 16 16"><path d="M3 2 H9 L12.5 5.5 V9.8 A3.6 3.6 0 0 0 9 15.5 H3Z" fill="#666"/><path d="M9 2 V5.5 H12.5Z" fill="#fff"/><circle cx="12.8" cy="13.2" r="2.5" fill="none" stroke="#666" stroke-width="1.8" stroke-dasharray="1.4 0.9"/><circle cx="12.8" cy="13.2" r="1.7" fill="none" stroke="#666" stroke-width="1.2"/></svg>
<div class="t" style="left:50.5px;top:939.89px;font-size:12px;line-height:16px;letter-spacing:-0.1px">Service Log File</div>
<svg style="left:7px;top:966.50px" width="6" height="9" viewBox="0 0 6 9"><path d="M0.5 0.5 L5 4.5 L0.5 8.5Z" fill="none" stroke="#9a9a9a" stroke-width="1"/></svg>
<svg style="left:26px;top:963px" width="16" height="16" viewBox="0 0 16 16"><path d="M8 1.9 L9.2 2 L9.6 3.8 L10.9 4.4 L12.4 3.4 L13.3 4.3 L12.4 5.8 L13 7.2 L14.4 7.5 V8.9 L13 9.3 L12.4 10.6 L13.3 12.1 L12.4 13 L10.9 12.1 L9.6 12.7 L9.2 14.6 H7.8 L7.4 12.7 L6.1 12.1 L4.6 13 L3.7 12.1 L4.6 10.6 L4 9.3 L1.7 8.9 V7.5 L4 7.2 L4.6 5.8 L3.7 4.3 L4.6 3.4 L6.1 4.4 L7.4 3.8 L7.8 2Z" fill="none" stroke="#6a6a6a" stroke-width="1.2" stroke-linejoin="round"/><circle cx="8.1" cy="8.2" r="2.1" fill="none" stroke="#6a6a6a" stroke-width="1.3"/></svg>
<div class="t" style="left:50.5px;top:963.84px;font-size:12px;line-height:16px;letter-spacing:-0.1px">Options</div>
<svg style="left:26px;top:987px" width="16" height="16" viewBox="0 0 16 16"><circle cx="4.6" cy="8.4" r="2.7" fill="none" stroke="#666" stroke-width="2.2"/><path d="M7.2 8.4 H15.5 M12 8.4 V11.6 M14.5 8.4 V10.6" stroke="#666" stroke-width="2.1"/></svg>
<div class="t" style="left:50.5px;top:987.79px;font-size:12px;line-height:16px;letter-spacing:-0.1px">License</div>
</div>
<div class="a" style="left:9px;top:1167px;width:316px;height:17px;background:#f8f8f8"></div>
<svg style="left:15px;top:1171px" width="6" height="10" viewBox="0 0 6 10"><path d="M5.5 0.5 L1 5 L5.5 9.5" fill="none" stroke="#555" stroke-width="1.1"/></svg>
<svg style="left:313px;top:1171px" width="6" height="10" viewBox="0 0 6 10"><path d="M0.5 0.5 L5 5 L0.5 9.5" fill="none" stroke="#555" stroke-width="1.1"/></svg>
<div class="a" style="left:28px;top:1173px;width:228px;height:5px;background:#cdcdd1;border-radius:3px"></div>
<div class="a" style="left:333px;top:85px;width:1246px;height:1101px;background:#f8f8f8;border:1px solid #d6d7d9;border-top:none"></div>
<div class="a" style="left:333px;top:83px;width:1246px;height:2px;background:#37474f"></div>
<div class="a" style="left:333px;top:61px;width:232px;height:24px;background:#37474f;border-radius:3px 3px 0 0"></div>
<div class="t" style="left:339px;top:65.84px;font-size:12px;line-height:16px;color:#fff">Agent-Based Event Log Consolidation</div>
<svg style="left:549px;top:69px" width="10" height="10" viewBox="0 0 10 10"><path d="M0.5 0.5L9.5 9.5M9.5 0.5L0.5 9.5" stroke="#e8e8e8" stroke-width="1.2"/></svg>
<svg style="left:1566px;top:71px" width="8" height="5" viewBox="0 0 8 5"><path d="M0.5 0.5L4 4L7.5 0.5" fill="none" stroke="#555" stroke-width="1.1"/></svg>
<div class="a" style="left:343px;top:95px;width:1226px;height:62px;background:#455a64"></div>
<svg style="left:361px;top:108px" width="50" height="45" viewBox="0 0 50 45"><path d="M0.3 3 Q0.3 0 3.3 0 H19.5 L24 5 H44 Q47 5 47 8 V35 Q47 38 44 38 H3.3 Q0.3 38 0.3 35Z" fill="#b2bac0"/><circle cx="35.3" cy="28.4" r="12.8" fill="#455a64" stroke="#b2bac0" stroke-width="2.9"/><path d="M34.7 19 V29 L42 33.5" fill="none" stroke="#b2bac0" stroke-width="3"/></svg>
<div class="t" style="left:431px;top:106.64px;font-size:19.8px;line-height:24px;color:#fff;font-size:19.8px">Event Log Consolidation - Template Properties</div>
<div class="t" style="left:431px;top:131.72px;font-size:13.8px;line-height:18px;color:#fff;font-size:13.8px">Configure log consolidation (e.g. Schedule Server Manager to download the latest Security Event Log entries and save to Microsoft SQL Server or MySQL).</div>
<svg style="left:1524px;top:113px" width="27" height="27" viewBox="0 0 27 27"><path d="M15 2.1 A11 11 0 1 1 11.6 2.1" fill="none" stroke="#c5cbcf" stroke-width="3"/></svg>
<div class="a" style="left:751px;top:182px;width:578px;height:22px;background:#eff0f1"></div>
<div class="a" style="left:348px;top:184px;width:53px;height:21px;background:#ececec;border:1px solid #a9a9a9;border-bottom:none"></div>
<div class="a" style="left:401px;top:184px;width:37px;height:21px;background:#ececec;border:1px solid #a9a9a9;border-bottom:none"></div>
<div class="a" style="left:438px;top:184px;width:54px;height:21px;background:#ececec;border:1px solid #a9a9a9;border-bottom:none"></div>
<div class="a" style="left:492px;top:184px;width:58px;height:21px;background:#ececec;border:1px solid #a9a9a9;border-bottom:none"></div>
<div class="a" style="left:550px;top:184px;width:54px;height:21px;background:#ececec;border:1px solid #a9a9a9;border-bottom:none"></div>
<div class="a" style="left:702px;top:184px;width:49px;height:21px;background:#ececec;border:1px solid #a9a9a9;border-bottom:none"></div>
<div class="a" style="left:346px;top:204px;width:977px;height:911px;background:#fff;border:1px solid #a9a9a9"></div>
<div class="a" style="left:603px;top:182px;width:99px;height:23px;background:#fff;border:1px solid #a9a9a9;border-bottom:none"></div>
<div class="t" style="left:348px;top:186.84px;width:53px;text-align:center">General</div>
<div class="t" style="left:401px;top:186.84px;width:37px;text-align:center">Logs</div>
<div class="t" style="left:438px;top:186.84px;width:54px;text-align:center">Options</div>
<div class="t" style="left:492px;top:186.84px;width:58px;text-align:center">Columns</div>
<div class="t" style="left:550px;top:186.84px;width:54px;text-align:center">Monitor</div>
<div class="t" style="left:702px;top:186.84px;width:49px;text-align:center">Actions</div>
<div class="t" style="left:603px;top:185.84px;width:99px;text-align:center">Agent Template</div>
<div class="a" style="left:368px;top:230px;width:13px;height:13px;border:1px solid #555;background:#fff"></div>
<svg style="left:368px;top:230px" width="13" height="13" viewBox="0 0 13 13"><path d="M2.3 6.3 L5 9.6 L11 2.6" fill="none" stroke="#1e1e1e" stroke-width="2.2"/></svg>
<div class="a" style="left:381px;top:229px;width:48px;height:15px;border:1px dotted #222"></div>
<div class="t" style="left:387px;top:228.84px;font-size:12px;line-height:16px;">Enabled</div>
<div class="a" style="left:368px;top:267px;width:13px;height:13px;border:1px solid #555;background:#fff"></div>
<svg style="left:368px;top:267px" width="13" height="13" viewBox="0 0 13 13"><path d="M2.3 6.3 L5 9.6 L11 2.6" fill="none" stroke="#1e1e1e" stroke-width="2.2"/></svg>
<div class="t" style="left:387px;top:265.84px;font-size:12px;line-height:16px;">Trigger an alert when assigned hosts do not connect within</div>
<div class="cb" style="left:707px;top:260px;width:80px;height:28px;border-color:#c8c8c8"></div>
<div class="t" style="left:714.5px;top:266.34px;font-size:12px;line-height:16px;">1</div>
<div class="cb" style="left:793px;top:260px;width:100px;height:28px;border-color:#a3a3a3"></div>
<div class="t" style="left:799.5px;top:267.04px;font-size:12px;line-height:16px;">Days</div>
<svg style="left:874px;top:271px" width="12" height="7" viewBox="0 0 12 7"><path d="M1 1L6 6L11 1" fill="none" stroke="#111" stroke-width="2"/></svg>
<svg style="left:1270px;top:241px" width="16" height="16" viewBox="0 0 16 16"><circle cx="8" cy="8" r="8" fill="#1b76d1"/><path d="M5.6 6 A2.4 2.3 0 1 1 8.9 8.1 Q8 8.6 8 9.8 V10.3" fill="none" stroke="#fff" stroke-width="1.5"/><rect x="7.2" y="11.5" width="1.6" height="1.6" fill="#fff"/></svg>
<div class="t" style="left:368px;top:318.65px;font-size:14px;line-height:18px;font-weight:700;font-size:14px">On Host Not Connecting</div>
<div class="cb" style="left:363px;top:347px;width:198px;height:28px;border-color:#c2c2c2"></div>
<div class="t" style="left:372px;top:353.84px;font-size:12px;line-height:16px;color:#333">Select from list</div>
<svg style="left:540px;top:357px" width="12" height="7" viewBox="0 0 12 7"><path d="M0.7 0.7L6 6L11.3 0.7" fill="none" stroke="#333" stroke-width="1.5"/></svg>
<div class="b" style="left:567px;top:347px;width:28px;height:28px"></div>
<svg style="left:574px;top:354px" width="14" height="14" viewBox="0 0 14 14"><path d="M7 0V14M0 7H14" stroke="#444" stroke-width="2"/></svg>
<div class="bd" style="left:599px;top:347px;width:28px;height:28px"></div>
<svg style="left:603px;top:352px" width="18" height="18" viewBox="0 0 18 18"><path d="M0 18 L0 14.5 L11 3.5 L14.5 7 L3.5 18Z" fill="#bdbdbd"/><path d="M12.5 2 L14.5 0 L18 3.5 L16 5.5Z" fill="#bdbdbd"/></svg>
<div class="bd" style="left:631px;top:347px;width:28px;height:28px"></div>
<svg style="left:636px;top:352px" width="18" height="18" viewBox="0 0 18 18"><rect x="1" y="1" width="16" height="16" rx="2" fill="none" stroke="#bdbdbd" stroke-width="2"/><path d="M4.5 9H13.5" stroke="#bdbdbd" stroke-width="2"/></svg>
<div class="b" style="left:663px;top:347px;width:28px;height:28px"></div>
<svg style="left:667px;top:351px" width="20" height="20" viewBox="0 0 20 20"><path d="M1 12 V2.5 Q1 1 2.5 1 H12" fill="none" stroke="#3a3a3a" stroke-width="1.7" stroke-linecap="round"/><path d="M5 16 V6.5 Q5 5 6.5 5 H16" fill="none" stroke="#3a3a3a" stroke-width="1.7" stroke-linecap="round"/><rect x="9.1" y="9.1" width="10.4" height="10.4" rx="2" fill="none" stroke="#3a3a3a" stroke-width="1.8"/><path d="M11.8 14.3H16.8" stroke="#3a3a3a" stroke-width="1.8"/></svg>
<div class="a" style="left:363px;top:381px;width:500px;height:121px;background:#fff;border:1px solid #a9a9a9"></div>
<div class="t" style="left:372px;top:386.84px;font-size:12px;line-height:16px;">Desktop Tray Notification</div>
<div class="t" style="left:372px;top:410.64px;font-size:12px;line-height:16px;">Send an Email</div>
<div class="t" style="left:372px;top:434.44px;font-size:12px;line-height:16px;">SNMP Trap</div>
<div class="t" style="left:372px;top:458.24px;font-size:12px;line-height:16px;">Syslog</div>
<div class="t" style="left:372px;top:482.04px;font-size:12px;line-height:16px;">Write to Event Log</div>
<div class="a" style="left:1323px;top:182px;width:6px;height:933px;background:#eef0f0"></div>
<div class="a" style="left:1329px;top:182px;width:237px;height:933px;background:#f8f8f8;border:1px solid #d0d1d3"></div>
<div class="a" style="left:1330px;top:183px;width:235px;height:21px;background:#eceef0"></div>
<div class="t" style="left:1336px;top:186.84px;font-size:12px;line-height:16px;">Assignments</div>
<svg style="left:1412px;top:191px" width="110" height="5"><defs><pattern id="gp1412" width="4" height="4" patternUnits="userSpaceOnUse"><rect x="0" y="0" width="1" height="1" fill="#8a8a8a"/><rect x="2" y="2" width="1" height="1" fill="#8a8a8a"/></pattern></defs><rect width="110" height="5" fill="url(#gp1412)"/></svg>
<svg style="left:1530px;top:191px" width="8" height="5" viewBox="0 0 8 5"><path d="M0.5 0.5L4 4L7.5 0.5" fill="none" stroke="#555" stroke-width="1.1"/></svg>
<svg style="left:1548px;top:187px" width="9" height="12" viewBox="0 0 9 12"><path d="M2.4 1 H6.6 V7" fill="none" stroke="#5a5a5a" stroke-width="1.8"/><path d="M2.4 1 V7" stroke="#5a5a5a" stroke-width="1.1"/><path d="M1 7.4 H8" stroke="#5a5a5a" stroke-width="1.5"/><path d="M4.4 7.5 V11" stroke="#5a5a5a" stroke-width="1.2"/></svg>
<svg style="left:1333px;top:216px" width="18" height="22" viewBox="0 0 18 22"><rect x="0" y="0" width="18" height="6" rx="1.3" fill="#0d84cf"/><rect x="2" y="2" width="1.5" height="1.5" fill="#fff"/><rect x="5" y="2" width="1.2" height="2" fill="#fff"/><rect x="0" y="8" width="18" height="6" rx="1.3" fill="#0d84cf"/><rect x="2" y="10" width="1.5" height="1.5" fill="#fff"/><rect x="5" y="10" width="1.2" height="2" fill="#fff"/><rect x="0" y="16" width="18" height="6" rx="1.3" fill="#0d84cf"/><rect x="2" y="18" width="1.5" height="1.5" fill="#fff"/><rect x="5" y="18" width="1.2" height="2" fill="#fff"/></svg>
<div class="t" style="left:1359.5px;top:220.29px;font-size:13.6px;line-height:16px;font-weight:700;font-size:13.6px">Hosts</div>
<div class="cb" style="left:1330px;top:246px;width:201px;height:28px;border-color:#c6c6c6"></div>
<div class="t" style="left:1339px;top:253.04px;font-size:12px;line-height:16px;color:#333">Select from list</div>
<svg style="left:1510px;top:256px" width="12" height="7" viewBox="0 0 12 7"><path d="M0.7 0.7L6 6L11.3 0.7" fill="none" stroke="#333" stroke-width="1.6"/></svg>
<div class="b" style="left:1535px;top:246px;width:28px;height:28px"></div>
<svg style="left:1542px;top:253px" width="14" height="14" viewBox="0 0 14 14"><path d="M7 0V14M0 7H14" stroke="#3c3c3c" stroke-width="1.9"/></svg>
<div class="a" style="left:1330px;top:282px;width:235px;height:1px;background:#a9a9a9"></div>
<svg style="left:1333px;top:310px" width="20" height="16" viewBox="0 0 20 16"><path d="M0 1.5 Q0 0 1.5 0 H7 L9 2 H18 Q19.5 2 19.5 3.5 V13.5 Q19.5 15 18 15 H1.5 Q0 15 0 13.5Z" fill="#555"/></svg>
<div class="t" style="left:1359.5px;top:310.29px;font-size:13.6px;line-height:16px;font-weight:700;font-size:13.6px">Host Groups</div>
<div class="cb" style="left:1330px;top:335px;width:201px;height:28px;border-color:#c6c6c6"></div>
<div class="t" style="left:1339px;top:342.04px;font-size:12px;line-height:16px;color:#333">Select from list</div>
<svg style="left:1510px;top:345px" width="12" height="7" viewBox="0 0 12 7"><path d="M0.7 0.7L6 6L11.3 0.7" fill="none" stroke="#333" stroke-width="1.6"/></svg>
<div class="b" style="left:1535px;top:335px;width:28px;height:28px"></div>
<svg style="left:1542px;top:342px" width="14" height="14" viewBox="0 0 14 14"><path d="M7 0V14M0 7H14" stroke="#3c3c3c" stroke-width="1.9"/></svg>
<div class="a" style="left:1330px;top:367px;width:201px;height:74px;background:#fff;border:1px solid #a9a9a9"></div>
<div class="t" style="left:1339px;top:372.84px;font-size:12px;line-height:16px;">Domain Controllers</div>
<div class="t" style="left:1339px;top:396.64px;font-size:12px;line-height:16px;">Production Servers</div>
<div class="t" style="left:1339px;top:420.44px;font-size:12px;line-height:16px;">Workstations</div>
<div class="bd" style="left:1535px;top:367px;width:28px;height:27px"></div>
<svg style="left:1540px;top:372px" width="18" height="18" viewBox="0 0 18 18"><rect x="0.9" y="0.9" width="16" height="16" rx="2" fill="none" stroke="#bcbcbc" stroke-width="1.6"/><path d="M4 9H14" stroke="#bcbcbc" stroke-width="1.6"/></svg>
<div class="b" style="left:1535px;top:399px;width:28px;height:28px"></div>
<svg style="left:1539px;top:403px" width="20" height="20" viewBox="0 0 20 20"><path d="M1 12 V2.5 Q1 1 2.5 1 H12" fill="none" stroke="#3a3a3a" stroke-width="1.7" stroke-linecap="round"/><path d="M5 16 V6.5 Q5 5 6.5 5 H16" fill="none" stroke="#3a3a3a" stroke-width="1.7" stroke-linecap="round"/><rect x="9.1" y="9.1" width="10.4" height="10.4" rx="2" fill="none" stroke="#3a3a3a" stroke-width="1.8"/><path d="M11.8 14.3H16.8" stroke="#3a3a3a" stroke-width="1.8"/></svg>
<svg style="left:1333px;top:460px" width="20" height="16" viewBox="0 0 20 16"><path d="M0 1.5 Q0 0 1.5 0 H7 L9 2 H18 Q19.5 2 19.5 3.5 V13.5 Q19.5 15 18 15 H1.5 Q0 15 0 13.5Z" fill="#555"/></svg>
<div class="t" style="left:1359px;top:460.29px;font-size:13.6px;line-height:16px;font-weight:700;font-size:13.6px">Template Groups</div>
<div class="cb" style="left:1330px;top:486px;width:201px;height:28px;border-color:#c6c6c6"></div>
<div class="t" style="left:1339px;top:493.04px;font-size:12px;line-height:16px;color:#333">Select from list</div>
<svg style="left:1510px;top:496px" width="12" height="7" viewBox="0 0 12 7"><path d="M0.7 0.7L6 6L11.3 0.7" fill="none" stroke="#333" stroke-width="1.6"/></svg>
<div class="b" style="left:1535px;top:486px;width:28px;height:28px"></div>
<svg style="left:1542px;top:493px" width="14" height="14" viewBox="0 0 14 14"><path d="M7 0V14M0 7H14" stroke="#3c3c3c" stroke-width="1.9"/></svg>
<div class="a" style="left:1330px;top:518px;width:201px;height:60px;background:#fff;border:1px solid #a9a9a9"></div>
<div class="t" style="left:1339px;top:523.84px;font-size:12px;line-height:16px;">Log Consolidation</div>
<div class="bd" style="left:1535px;top:518px;width:28px;height:27px"></div>
<svg style="left:1540px;top:523px" width="18" height="18" viewBox="0 0 18 18"><rect x="0.9" y="0.9" width="16" height="16" rx="2" fill="none" stroke="#bcbcbc" stroke-width="1.6"/><path d="M4 9H14" stroke="#bcbcbc" stroke-width="1.6"/></svg>
<div class="b" style="left:1535px;top:550px;width:28px;height:28px"></div>
<svg style="left:1539px;top:554px" width="20" height="20" viewBox="0 0 20 20"><path d="M1 12 V2.5 Q1 1 2.5 1 H12" fill="none" stroke="#3a3a3a" stroke-width="1.7" stroke-linecap="round"/><path d="M5 16 V6.5 Q5 5 6.5 5 H16" fill="none" stroke="#3a3a3a" stroke-width="1.7" stroke-linecap="round"/><rect x="9.1" y="9.1" width="10.4" height="10.4" rx="2" fill="none" stroke="#3a3a3a" stroke-width="1.8"/><path d="M11.8 14.3H16.8" stroke="#3a3a3a" stroke-width="1.8"/></svg>
<div class="btn" style="left:358px;top:1135px;width:80px;height:26px">Save</div>
<div class="btn" style="left:446px;top:1135px;width:80px;height:26px">Export</div>
<div class="btn" style="left:534px;top:1135px;width:89px;height:26px">View Summary</div>
<div class="btn" style="left:1386px;top:1135px;width:80px;height:26px">Delete</div>
<div class="btn" style="left:1474px;top:1135px;width:80px;height:26px">Close</div>
<div class="a" style="left:0px;top:0px;width:1586px;height:1px;background:#5a5a5a"></div>
<div class="a" style="left:0px;top:0px;width:1px;height:1193px;background:#5a5a5a"></div>
<div class="a" style="left:1585px;top:0px;width:1px;height:1193px;background:#5a5a5a"></div>
<div class="a" style="left:0px;top:1192px;width:1586px;height:1px;background:#5a5a5a"></div>
<div class="a" style="left:1px;top:1191px;width:1584px;height:1px;background:#f7f8f9"></div>
<div class="a" style="left:1px;top:55px;width:1px;height:1136px;background:#f7f8f9"></div>
<div class="a" style="left:1584px;top:55px;width:1px;height:1136px;background:#f7f8f9"></div>
<div class="a" style="left:334px;top:85px;width:1px;height:1100px;background:#fcfdfd"></div>
</body></html>
